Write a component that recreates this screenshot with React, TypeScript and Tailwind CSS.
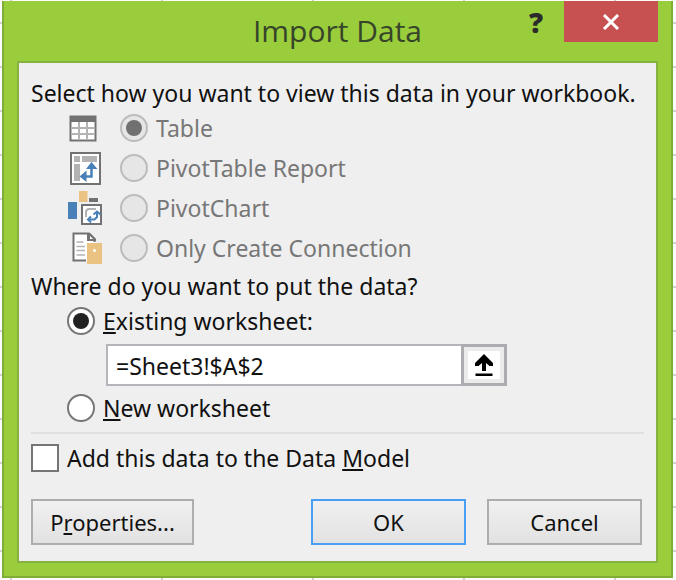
import { useState, type ReactNode } from 'react'

const views = [
  { id: 'table', label: 'Table', icon: <TableIcon /> },
  { id: 'pivot-table', label: 'PivotTable Report', icon: <PivotTableIcon /> },
  { id: 'pivot-chart', label: 'PivotChart', icon: <PivotChartIcon /> },
  { id: 'connection', label: 'Only Create Connection', icon: <ConnectionIcon /> },
]

function TableIcon() {
  return (
    <svg width="36" height="34" viewBox="-2 0 36 34" aria-hidden="true">
      <path d="M1.500 5.500h25v24h-25z" fill="#fff" stroke="#727272" strokeWidth="2" />
      <path d="M1 5h26v6H1z" fill="#727272" />
      <path d="M3 17h22M3 23h22M10 11v17M18 11v17" stroke="#b3b3b3" strokeWidth="2" />
    </svg>
  )
}

function PivotTableIcon() {
  return (
    <svg width="36" height="34" viewBox="-2 0 36 34" aria-hidden="true">
      <path d="M2 2h29v31H2z" fill="#fff" stroke="#727272" strokeWidth="2" />
      <path d="M5 5h6v6H5zM13 5h15v6H13zM5 13h6v17H5z" fill="#b3b3b3" />
      <path d="M22.500 16v9.500h-6" fill="none" stroke="#4a80b8" strokeWidth="2.500" />
      <path d="M22.500 11l6 7H17zM10.500 25.500l7-6v11.500z" fill="#4a80b8" />
    </svg>
  )
}

function PivotChartIcon() {
  return (
    <svg width="36" height="36" viewBox="0 0 36 36" aria-hidden="true">
      <path d="M1 12h9v17H1z" fill="#4a80b8" />
      <path d="M12 1h8.500v11H12z" fill="#eac282" />
      <path d="M22 8h9v4h-9z" fill="#727272" />
      <path d="M15 15h19v19H15z" fill="#fff" stroke="#727272" strokeWidth="2" />
      <path d="M19 27v-6l2-2h8" fill="none" stroke="#b3b3b3" strokeWidth="2" />
      <path d="M30 22v5l-2.500 2.500h-6" fill="none" stroke="#4a80b8" strokeWidth="2" />
      <path d="M26.500 24.500l3.500-3 3.500 3M24 26.500l-3 3 3 3" fill="none" stroke="#4a80b8" strokeWidth="2" />
    </svg>
  )
}

function ConnectionIcon() {
  return (
    <svg width="36" height="34" viewBox="-4 0 36 34" aria-hidden="true">
      <path d="M2 2h15l8 8v20H2z" fill="#fff" />
      <path d="M15 29.500H2.500v-27H18l5.500 5.500v3" fill="none" stroke="#727272" strokeWidth="2" />
      <path d="M16 2v8h9V8l-6-6z" fill="#727272" />
      <path d="M19 5l3 3h-3z" fill="#fff" />
      <path d="M5.500 11h7M5.500 15.500h8.500M5.500 19.500h8.500M5.500 24h8.500" stroke="#b3b3b3" strokeWidth="1.500" />
      <path d="M16 12h15v21H16z" fill="#eac282" />
      <circle cx="23.500" cy="19.500" r="1.500" fill="#fff" />
    </svg>
  )
}

function CollapseIcon() {
  return (
    <svg width="20" height="24" viewBox="0 0 20 24" aria-hidden="true">
      <path d="M10 1l9 9v3h-3.500L12 10V18H8V10l-3.500 3H1v-3z" fill="#000" />
      <path d="M1.500 20.500h17v2.500h-17z" fill="#000" />
    </svg>
  )
}

function Radio({
  id,
  name,
  checked,
  disabled,
  onChange,
}: {
  id: string
  name: string
  checked: boolean
  disabled?: boolean
  onChange?: () => void
}) {
  return (
    <span className="grid shrink-0 place-items-center">
      <input
        type="radio"
        id={id}
        name={name}
        checked={checked}
        disabled={disabled}
        onChange={onChange ?? (() => {})}
        className="peer col-start-1 row-start-1 size-7 appearance-none rounded-full border-2 border-[#777777] bg-white disabled:border-[#bcbcbc] disabled:bg-[#e6e6e6]"
      />
      <span className="pointer-events-none col-start-1 row-start-1 hidden size-4 rounded-full bg-[#222222] peer-checked:block peer-disabled:bg-[#707070]" />
    </span>
  )
}

function Key({ children }: { children: ReactNode }) {
  return <span className="underline decoration-2 underline-offset-2">{children}</span>
}

export default function App() {
  const [target, setTarget] = useState('existing')
  const [cell, setCell] = useState('=Sheet3!$A$2')
  const [addToModel, setAddToModel] = useState(false)

  return (
    <main className="min-h-screen bg-[#fbfbfb] bg-[linear-gradient(to_right,#d0d0d0_2px,transparent_2px),linear-gradient(#d0d0d0_2px,transparent_2px)] bg-[size:151px_100%,100%_44px] bg-[position:10px_0,0_22px] pt-px pr-[3px] pb-0.5 pl-0.5 font-['Noto_Sans',sans-serif] text-[23px] text-[#111111]">
      <section
        role="dialog"
        aria-labelledby="title"
        className="border-2 border-t-0 border-[#7fae35] bg-[#9acd3c] px-[13px] pb-[13px]"
      >
        <header className="grid h-[60px] grid-cols-[1fr_auto_1fr] font-['Open_Sans',sans-serif]">
          <h1 id="title" className="col-start-2 pt-2 text-[30px] leading-[44px] font-normal text-[#36452a]">
            Import Data
          </h1>
          <div className="flex items-start justify-end">
            <button
              type="button"
              aria-label="Help"
              className="h-[42px] w-14 text-[28px] leading-[42px] font-extrabold text-[#2b2b2b]"
            >
              ?
            </button>
            <button
              type="button"
              aria-label="Close"
              className="grid h-[41px] w-[94px] place-items-center bg-[#c75050]"
            >
              <svg width="18" height="16" viewBox="0 0 18 16" aria-hidden="true">
                <path d="M2 1l14 14M16 1L2 15" stroke="#fff" strokeWidth="3" />
              </svg>
            </button>
          </div>
        </header>

        <form
          onSubmit={(e) => e.preventDefault()}
          className="border-2 border-[#86b33f] bg-[#efefef] px-3 pt-[15px] pb-4"
        >
          <fieldset>
            <legend className="h-[30px] leading-[30px] whitespace-nowrap">
              Select how you want to view this data in your workbook.
            </legend>
            {views.map((v) => (
              <div key={v.id} className="flex h-10 items-center pl-9 text-[#777777]">
                <span className="flex w-[53px] justify-start">{v.icon}</span>
                <Radio id={v.id} name="view" checked={v.id === 'table'} disabled />
                <label htmlFor={v.id} className="pl-2 leading-7">
                  {v.label}
                </label>
              </div>
            ))}
          </fieldset>

          <fieldset>
            <legend className="h-9 leading-9">Where do you want to put the data?</legend>
            <div className="flex h-[34px] items-center pl-9">
              <Radio
                id="existing"
                name="target"
                checked={target === 'existing'}
                onChange={() => setTarget('existing')}
              />
              <label htmlFor="existing" className="pl-2 leading-7">
                <Key>E</Key>xisting worksheet:
              </label>
            </div>
            <div className="mt-1.5 mb-1 ml-[75px] flex h-[42px] w-[401px]">
              <input
                type="text"
                aria-label="Cell reference"
                value={cell}
                onChange={(e) => setCell(e.target.value)}
                className="min-w-0 flex-1 border-2 border-r-0 border-[#b4b4ba] bg-white px-2 pt-0.5 outline-none"
              />
              <button
                type="button"
                aria-label="Collapse dialog"
                className="grid w-[46px] place-items-center border-3 border-[#adadb1] bg-[#ebebeb]"
              >
                <span className="grid h-7 w-8 place-items-center bg-white">
                  <CollapseIcon />
                </span>
              </button>
            </div>
            <div className="flex h-9 items-center pl-9">
              <Radio
                id="new"
                name="target"
                checked={target === 'new'}
                onChange={() => setTarget('new')}
              />
              <label htmlFor="new" className="pl-2 leading-7">
                <Key>N</Key>ew worksheet
              </label>
            </div>
          </fieldset>

          <hr className="mt-1.5 border-t-2 border-[#e0e0e0]" />

          <div className="flex h-12 items-center">
            <input
              type="checkbox"
              id="model"
              checked={addToModel}
              onChange={(e) => setAddToModel(e.target.checked)}
              className="size-7 appearance-none border-2 border-[#757575] bg-white checked:bg-[#222222]"
            />
            <label htmlFor="model" className="pl-2 leading-7">
              Add this data to the Data <Key>M</Key>odel
            </label>
          </div>

          <div className="mt-[17px] flex h-[46px] gap-[21px] pr-0.5 text-[22px]">
            <button
              type="button"
              className="mr-auto w-[163px] border-2 border-[#adadad] bg-linear-to-b from-[#f0f0f0] to-[#e2e2e2]"
            >
              P<Key>r</Key>operties...
            </button>
            <button
              type="submit"
              className="w-[155px] border-2 border-[#4a9ff5] bg-linear-to-b from-[#f0f0f0] to-[#e2e2e2]"
            >
              OK
            </button>
            <button
              type="button"
              className="w-[155px] border-2 border-[#adadad] bg-linear-to-b from-[#f0f0f0] to-[#e2e2e2]"
            >
              Cancel
            </button>
          </div>
        </form>
      </section>
    </main>
  )
}
